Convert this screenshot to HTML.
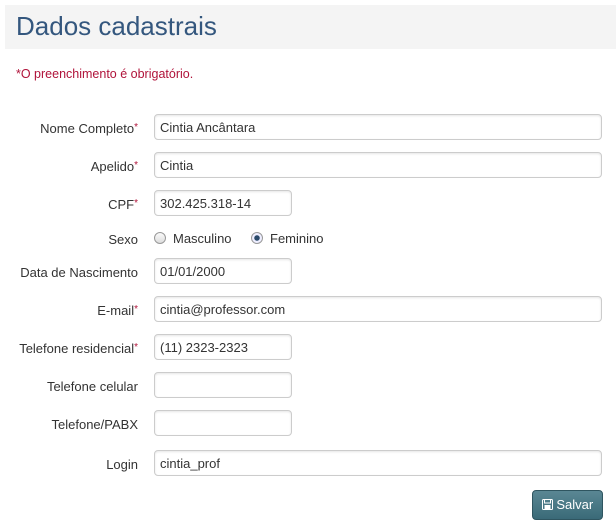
<!DOCTYPE html>
<html><head><meta charset="utf-8"><style>
body{margin:0;width:616px;height:530px;background:#fff;font-family:"Liberation Sans",sans-serif;font-size:13px;color:#333;position:relative;overflow:hidden}
.hdr{position:absolute;left:5px;top:5px;width:611px;height:44px;background:#f4f4f4}
.hdr h1{margin:0;position:absolute;left:11px;top:6px;font-weight:normal;font-size:26px;color:#34577e}
.req{position:absolute;left:16px;top:67px;color:#b0133a;font-size:12.5px}
.lbl{position:absolute;right:478px;text-align:right;white-space:nowrap;margin-top:1px}
.lbl i{font-style:normal;color:#b0133a;position:relative;top:-3px;font-size:10px}
.in{position:absolute;left:154px;border:1px solid #ccc;border-radius:4px;box-shadow:inset 0 1px 2px rgba(0,0,0,.1);box-sizing:border-box;padding:5px 5px 0;width:448px;height:26px}
.s{width:138px}
.r{position:absolute;top:232px;width:12px;height:12px;border-radius:50%;border:1px solid #999;box-sizing:border-box;background:linear-gradient(#fafafa,#ddd)}
.btn{position:absolute;left:532px;top:490px;width:71px;height:30px;border-radius:4px;background:linear-gradient(#5a8794,#3a6a78);border:1px solid #2f5560;box-sizing:border-box;color:#fff;font-size:13px;line-height:28px;text-align:center}
</style></head><body>
<div class="hdr"><h1>Dados cadastrais</h1></div>
<div class="req">*O preenchimento é obrigatório.</div>

<div class="lbl" style="top:120px">Nome Completo<i>*</i></div><div class="in" style="top:114px">Cintia Ancântara</div>
<div class="lbl" style="top:158px">Apelido<i>*</i></div><div class="in" style="top:152px">Cintia</div>
<div class="lbl" style="top:196px">CPF<i>*</i></div><div class="in s" style="top:190px">302.425.318-14</div>
<div class="lbl" style="top:231px">Sexo</div>
<div class="r" style="left:154px"></div><div style="position:absolute;left:173px;top:231px">Masculino</div>
<div class="r" style="left:251px;background:radial-gradient(circle,#2a4a6a 0 2.5px,#eef 3px)"></div><div style="position:absolute;left:270px;top:231px">Feminino</div>
<div class="lbl" style="top:264px">Data de Nascimento</div><div class="in s" style="top:258px">01/01/2000</div>
<div class="lbl" style="top:302px">E-mail<i>*</i></div><div class="in" style="top:296px">cintia@professor.com</div>
<div class="lbl" style="top:340px">Telefone residencial<i>*</i></div><div class="in s" style="top:334px">(11) 2323-2323</div>
<div class="lbl" style="top:378px">Telefone celular</div><div class="in s" style="top:372px"></div>
<div class="lbl" style="top:416px">Telefone/PABX</div><div class="in s" style="top:410px"></div>
<div class="lbl" style="top:456px">Login</div><div class="in" style="top:450px">cintia_prof</div>
<div class="btn"><svg width="11" height="11" viewBox="0 0 11 11" style="vertical-align:-1px"><rect x="0.5" y="0.5" width="10" height="10" rx="1" fill="none" stroke="#fff"/><rect x="2.5" y="0.5" width="6" height="3.5" fill="none" stroke="#fff"/><rect x="2.5" y="6" width="6" height="4.5" fill="#fff"/></svg> Salvar</div>
</body></html>
